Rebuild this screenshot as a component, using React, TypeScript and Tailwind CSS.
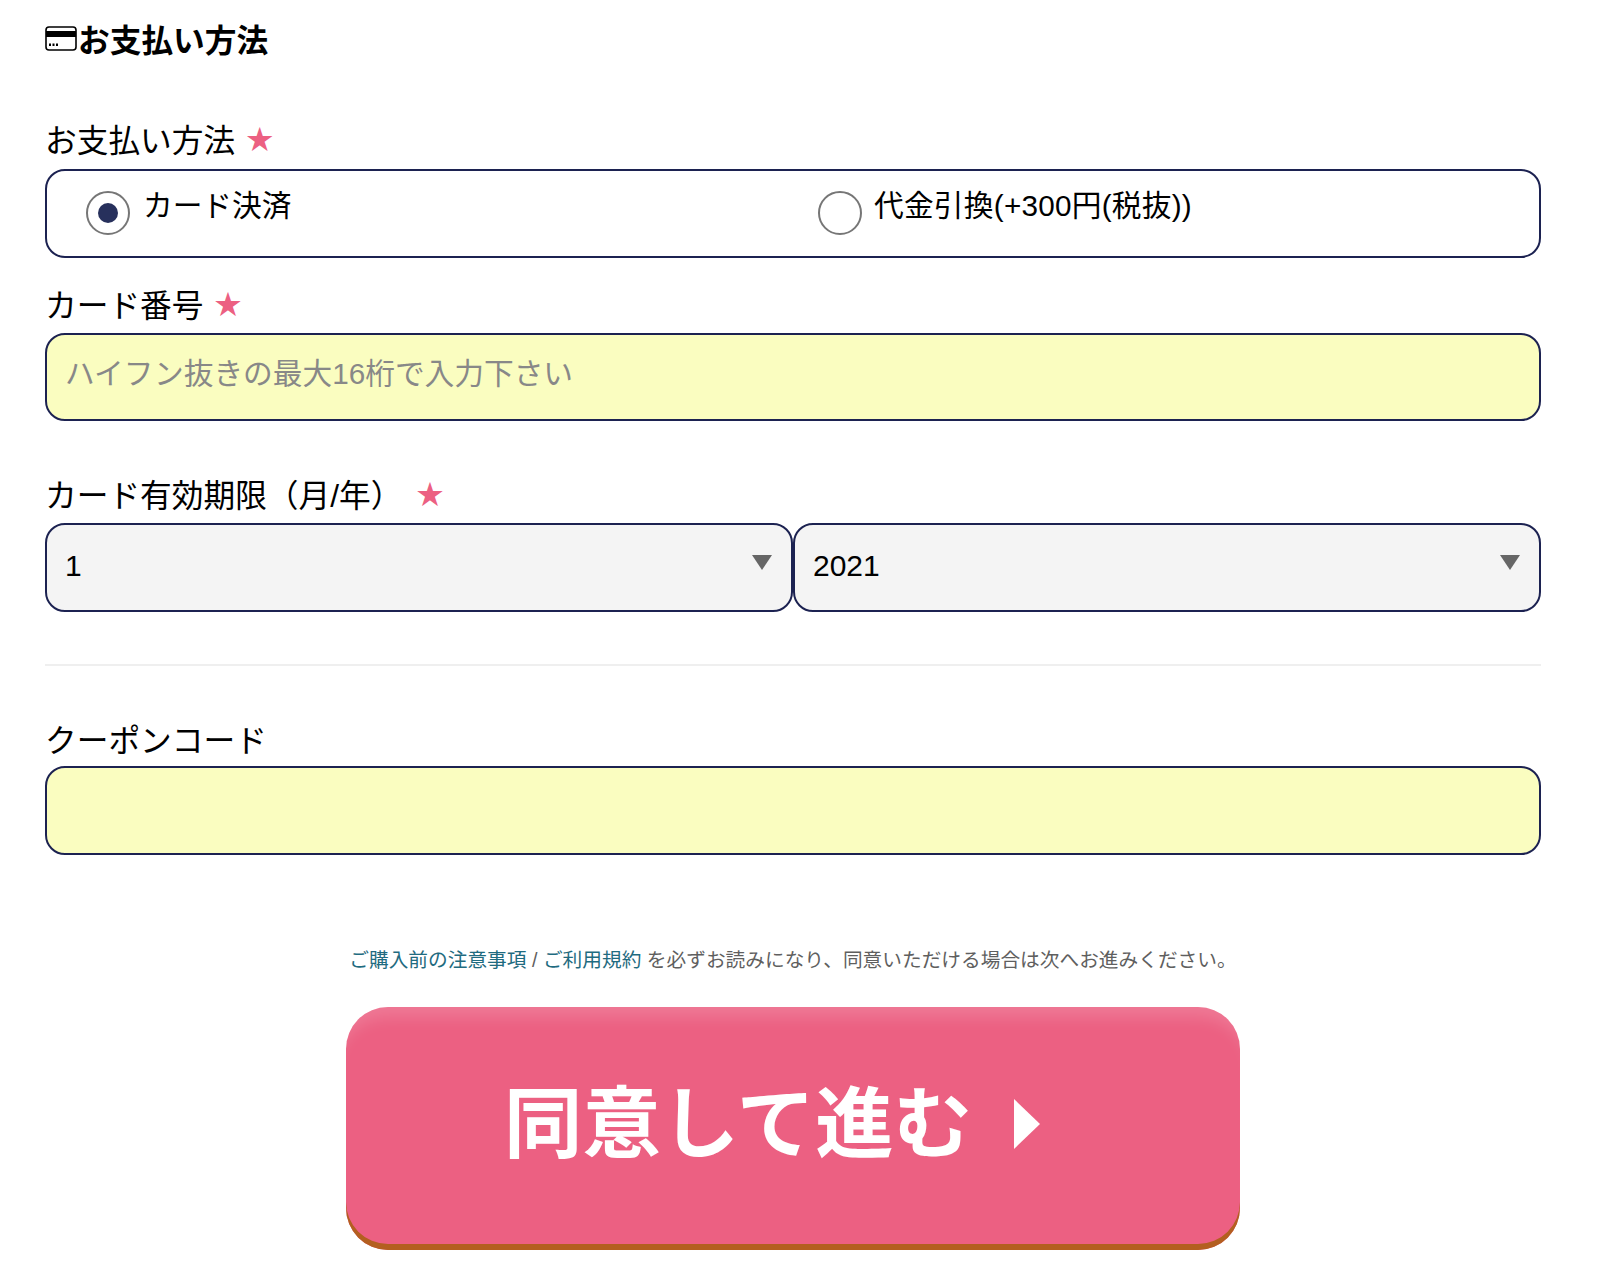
import React from 'react';

const Star = ({ far }: { far?: boolean }) => (
  <span className={`text-[#ec6082] ${far ? 'ml-[14px]' : 'ml-[11px]'} mb-[3px] text-[27px] leading-none`}>★</span>
);

const CardIcon = () => (
  <svg width="32" height="25" viewBox="0 0 32 25" className="shrink-0 mb-[7px]">
    <rect x="1" y="1" width="30" height="23" rx="3" fill="#fff" stroke="#000" strokeWidth="1.6" />
    <rect x="1" y="5" width="30" height="6" fill="#000" />
    <path d="M4 17.5h2v2.5h-2zM7.5 17.5h2v2.5h-2zM11 17.5h2v2.5h-2z" fill="#000" />
  </svg>
);

const Radio = ({ checked }: { checked?: boolean }) => (
  <span className="w-[44px] h-[44px] rounded-full border-2 border-[#767676] bg-white flex items-center justify-center shrink-0">
    {checked && <span className="w-[20px] h-[20px] rounded-full bg-[#27305c]" />}
  </span>
);

const Select = ({ value }: { value: string }) => (
  <div className="relative flex-1 h-[89px] rounded-[20px] border-2 border-[#1c2251] bg-[#f4f4f4] flex items-center pl-[18px] pb-[4px] text-[30px] text-black">
    {value}
    <svg width="20" height="15" viewBox="0 0 20 15" className="absolute right-[19px] top-[30px]">
      <path d="M0 0h20l-10 15z" fill="#666" />
    </svg>
  </div>
);

export default function App() {
  return (
    <div className="w-[1600px] h-[1264px] bg-white overflow-hidden pl-[45px] pr-[59px] pt-[22px] text-black font-['Liberation_Sans','Noto_Sans_CJK_JP',sans-serif]">
      <h2 className="flex items-center gap-[1px] h-[40px] text-[31.7px] font-bold">
        <CardIcon />
        お支払い方法
      </h2>

      <label className="flex items-center h-[44px] mt-[57px] pt-[2px] text-[31.7px]">お支払い方法<Star /></label>
      <div className="flex h-[89px] mt-[6px] border-2 border-[#1c2251] rounded-[20px] pl-[39px] pt-[20px]">
        <div className="flex w-[732px] gap-[13px]">
          <Radio checked />
          <span className="text-[29.7px] leading-[32px] mt-[-1px]">カード決済</span>
        </div>
        <div className="flex gap-[12px]">
          <Radio />
          <span className="text-[29.7px] leading-[32px] mt-[-1px] tracking-[0.25px]">代金引換(+300円(税抜))</span>
        </div>
      </div>

      <label className="flex items-center h-[44px] mt-[25px] pt-[4px] text-[31.7px]">カード番号<Star /></label>
      <div className="flex items-center h-[88px] mt-[6px] border-2 border-[#1c2251] rounded-[20px] bg-[#fafdc0] pl-[18px] pb-[6px] text-[29.7px] text-[#888888]">
        ハイフン抜きの最大16桁で入力下さい
      </div>

      <label className="flex items-center h-[44px] mt-[52px] pt-[4px] text-[31.7px]">カード有効期限（月/年）<Star far /></label>
      <div className="flex mt-[6px]">
        <Select value="1" />
        <Select value="2021" />
      </div>

      <hr className="mt-[52px] border-t-2 border-[#efefef]" />

      <label className="flex items-center h-[44px] mt-[50px] pt-[8px] text-[31.7px]">クーポンコード</label>
      <div className="h-[89px] mt-[6px] border-2 border-[#1c2251] rounded-[20px] bg-[#fafdc0]" />

      <p className="mt-[92px] text-center text-[19.7px] leading-[26px] text-[#5f5f5f]">
        <span className="text-[#1f6b80]">ご購入前の注意事項</span> / <span className="text-[#1f6b80]">ご利用規約</span> を必ずお読みになり、同意いただける場合は次へお進みください。
      </p>

      <button className="mx-auto mt-[34px] flex items-center justify-center gap-[42px] w-[894px] h-[243px] pb-[6px] pr-[42px] rounded-[42px] bg-[#ec6082] text-white text-[78.4px] font-bold shadow-[inset_0_22px_16px_-12px_rgba(255,255,255,0.16),inset_0_-6px_0_0_#b35f20]">
        同意して進む
        <svg width="26" height="50" viewBox="0 0 26 50" className="mb-[4px]"><path d="M0 0l26 25-26 25z" fill="#fff" /></svg>
      </button>
    </div>
  );
}
